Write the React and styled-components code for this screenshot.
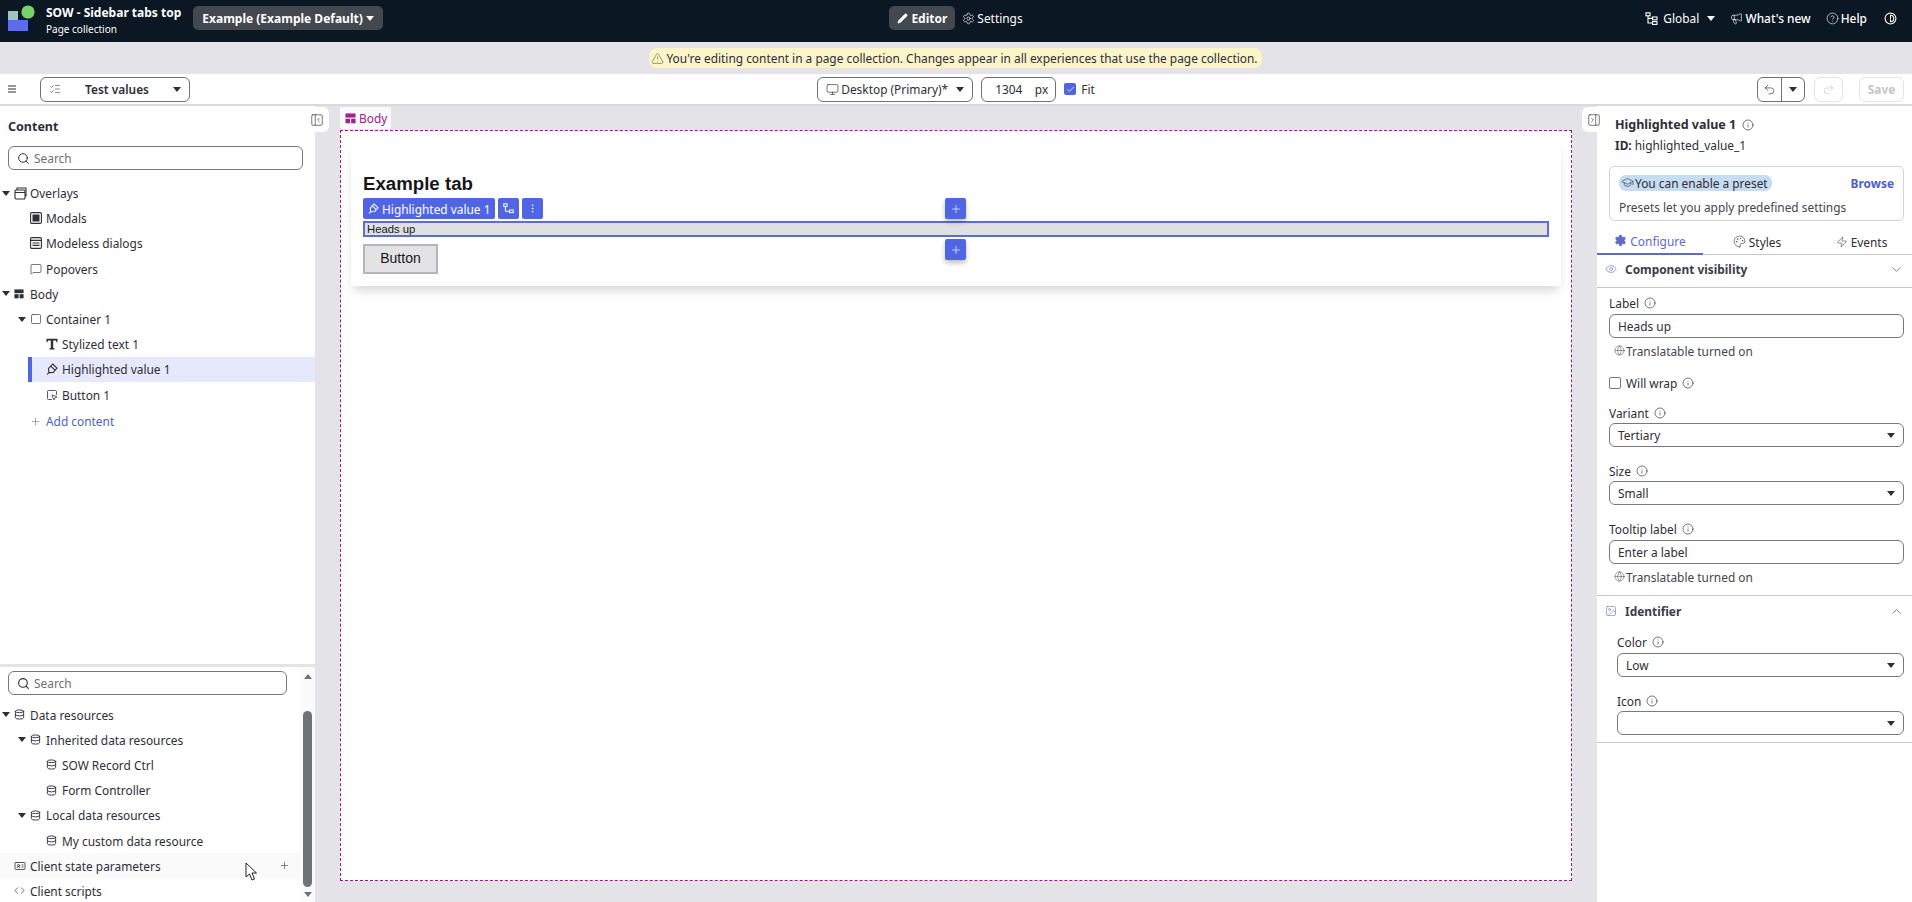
import React from "react";
import styled, { createGlobalStyle } from "styled-components";
import {
  Search,
  Info,
  Eye,
  Globe,
  ChevronDown,
  ChevronUp,
  Plus,
  Pencil,
  Settings,
  Palette,
  Zap,
  Megaphone,
  CircleHelp,
  Contrast,
  Database,
  Monitor,
  Undo2,
  Redo2,
  SquareMousePointer,
  GraduationCap,
  Image,
  Square,
  MessageSquare,
  Code,
  Check,
  EllipsisVertical,
  ListChecks,
  TriangleAlert,
  PanelLeftClose,
  PanelRightClose,
  IdCard,
} from "lucide-react";

const GlobalStyle = createGlobalStyle`
  html, body { margin: 0; padding: 0; height: 100%; }
  body { font-family: "Noto Sans", "Open Sans", sans-serif; font-size: 11.9px; color: #2e2e35; overflow: hidden; }
  #root { height: 100%; }
  * { box-sizing: border-box; }
`;

const Page = styled.div`
  display: flex;
  flex-direction: column;
  height: 902px;
  position: relative;
  overflow: hidden;
`;

/* top bar */
const TopBar = styled.header`
  height: 42px;
  background: #0b1722;
  color: #fff;
  display: grid;
  grid-template-columns: 1fr auto 1fr;
  align-items: center;
  padding: 0 8px 6px 8px;
  flex-shrink: 0;
`;
const TopLeft = styled.div`
  display: flex;
  align-items: center;
`;
const TitleBlock = styled.div`
  margin: 4px 0 0 11px;
  display: flex;
  flex-direction: column;
  gap: 1px;
`;
const AppTitle = styled.div`
  font-size: 12px;
  font-weight: 700;
  line-height: 16px;
  white-space: nowrap;
`;
const AppSub = styled.div`
  font-size: 10px;
  line-height: 14px;
`;
const DarkPill = styled.div`
  height: 24px;
  display: flex;
  align-items: center;
  gap: 3px;
  padding: 0 ${(p) => p.$pad || 8}px;
  background: #43474e;
  border-radius: 5px;
  font-weight: 700;
  font-size: 12px;
  white-space: nowrap;
  margin-left: ${(p) => p.$ml || 0}px;
`;
const TopCenter = styled.div`
  display: flex;
  align-items: center;
  gap: 7px;
`;
const TopLink = styled.div`
  display: flex;
  align-items: center;
  gap: 2px;
  font-weight: ${(p) => p.$weight || 400};
  white-space: nowrap;
`;
const TopRight = styled.div`
  display: flex;
  align-items: center;
  justify-content: flex-end;
  gap: 15px;
  padding-right: 7px;
`;
const Caret = styled.span`
  display: inline-block;
  flex-shrink: 0;
  width: 0;
  height: 0;
  border-left: ${(p) => p.$size || 4}px solid transparent;
  border-right: ${(p) => p.$size || 4}px solid transparent;
  border-top: ${(p) => (p.$size || 4) + 1}px solid ${(p) => p.$color || "#2e2e35"};
`;

/* banner */
const Banner = styled.div`
  height: 32px;
  background: #e3e3e8;
  display: flex;
  align-items: center;
  justify-content: center;
  flex-shrink: 0;
`;
const BannerPill = styled.div`
  height: 20px;
  display: flex;
  align-items: center;
  gap: 2px;
  padding: 0 4px 0 2px;
  background: #fbf5c9;
  border-radius: 8px;
  white-space: nowrap;
  margin-left: -1px;
`;

/* toolbar */
const Toolbar = styled.div`
  height: 32px;
  background: #fff;
  border-bottom: 2px solid #d9d9de;
  display: grid;
  grid-template-columns: 1fr auto 1fr;
  align-items: center;
  padding: 0 8px;
  flex-shrink: 0;
`;
const ToolLeft = styled.div`
  display: flex;
  align-items: center;
  gap: 24px;
`;
const ToolCenter = styled.div`
  display: flex;
  align-items: center;
  gap: 8px;
`;
const ToolRight = styled.div`
  display: flex;
  align-items: center;
  justify-content: flex-end;
  gap: 9px;
`;
const OutlineBox = styled.div`
  height: 25px;
  width: ${(p) => p.$w}px;
  display: flex;
  align-items: center;
  border: 1px solid ${(p) => (p.$faded ? "#e3e3e8" : "#6f6f76")};
  border-radius: 6px;
  padding: ${(p) => p.$pad || "0 8px"};
  gap: ${(p) => p.$gap ?? 6}px;
  color: ${(p) => (p.$faded ? "#c5c5ca" : "inherit")};
  font-weight: ${(p) => p.$weight || 400};
  justify-content: ${(p) => p.$justify || "flex-start"};
  margin-right: ${(p) => p.$mr || 0}px;
  white-space: nowrap;
`;
const Grow = styled.span`
  flex: 1;
  text-align: ${(p) => p.$align || "left"};
`;
const SplitCell = styled.div`
  width: 24px;
  height: 100%;
  display: flex;
  align-items: center;
  justify-content: center;
  border-left: ${(p) => (p.$line ? "1px solid #6f6f76" : "none")};
`;
const Tick = styled.span`
  width: 12px;
  height: 12px;
  background: #5065e4;
  border-radius: 2px;
  display: flex;
  align-items: center;
  justify-content: center;
  color: #fff;
`;
const FitLabel = styled.span`
  display: flex;
  align-items: center;
  gap: 5px;
`;

/* main */
const Main = styled.div`
  flex: 1;
  min-height: 0;
  display: grid;
  grid-template-columns: 315px 1fr 315px;
  background: #e3e3e8;
`;
const LeftPanel = styled.aside`
  display: flex;
  flex-direction: column;
  background: #fff;
  min-height: 0;
  overflow: hidden;
`;
const LeftTop = styled.div`
  flex: 1;
  min-height: 0;
`;
const PanelTitle = styled.h2`
  margin: 12px 0 10px 8px;
  font-size: 12.5px;
  line-height: 18px;
  font-weight: 700;
`;
const SearchBox = styled.div`
  height: 24px;
  margin-left: 8px;
  width: ${(p) => p.$w}px;
  border: 1px solid #77777e;
  border-radius: 6px;
  display: flex;
  align-items: center;
  gap: 4px;
  padding-left: 8px;
  color: #6f6f76;
  svg { color: #2e2e35; }
`;
const Tree = styled.div`
  margin-top: ${(p) => p.$mt}px;
`;
const Row = styled.div`
  height: 25.2px;
  display: flex;
  align-items: center;
  position: relative;
  padding-left: ${(p) => p.$pad}px;
  white-space: nowrap;
  background: ${(p) => (p.$selected ? "#e6e8fb" : p.$hover ? "#fafafb" : "transparent")};
  ${(p) =>
    p.$selected &&
    `margin-left: 28px; padding-left: ${p.$pad - 32}px; border-left: 4px solid #5065e4;`}
`;
const RowCaret = styled.span`
  width: 12px;
  display: flex;
  flex-shrink: 0;
`;
const RowIcon = styled.span`
  width: 16px;
  height: 14px;
  display: flex;
  align-items: center;
  flex-shrink: 0;
`;
const AddRow = styled.div`
  margin: 3px 0 0 30px;
  height: 22px;
  display: flex;
  align-items: center;
  gap: 5px;
  color: #4f5fc5;
`;
const RowAction = styled.span`
  position: absolute;
  left: 279px;
  display: flex;
`;
const LeftBottom = styled.div`
  height: 238px;
  flex-shrink: 0;
  border-top: 3px solid #e3e3e8;
  padding-top: 4px;
  position: relative;
  overflow: hidden;
`;
const BottomContent = styled.div`
  width: 303px;
`;
const Scrollbar = styled.div`
  position: absolute;
  top: 0;
  bottom: 0;
  right: 0;
  width: 15px;
  background: #fbfbfc;
  display: flex;
  flex-direction: column;
  align-items: flex-start;
  padding-left: 3px;
`;
const ArrowUp = styled.span`
  margin: 7px 0 0 1px;
  width: 0;
  height: 0;
  border-left: 4px solid transparent;
  border-right: 4px solid transparent;
  border-bottom: 5px solid #70747a;
`;
const ArrowDown = styled.span`
  margin: 5px 0 0 1px;
  width: 0;
  height: 0;
  border-left: 4px solid transparent;
  border-right: 4px solid transparent;
  border-top: 5px solid #70747a;
`;
const Thumb = styled.div`
  margin-top: 32px;
  width: 9px;
  height: 176px;
  background: #6f7379;
  border-radius: 5px;
`;
const Cursor = styled.svg`
  position: absolute;
  left: 245px;
  top: 195px;
`;

/* canvas */
const Center = styled.main`
  position: relative;
  display: flex;
  flex-direction: column;
  padding: 0 25px 21px 25px;
  min-height: 0;
`;
const BodyTab = styled.div`
  align-self: flex-start;
  height: 22px;
  margin: 1px 0 1px 0;
  padding: 0 4px 0 5px;
  background: #fafafb;
  border-radius: 0 0 3px 3px;
  color: #a4208f;
  display: flex;
  align-items: center;
  gap: 3px;
`;
const Canvas = styled.div`
  flex: 1;
  background: #fff;
  border: 1px dashed #a4108f;
  padding: 12px 10px;
`;
const Card = styled.section`
  background: #fff;
  box-shadow: 0 7px 10px -3px rgba(0, 0, 0, 0.17);
  padding: 29px 12px 12px;
  font-family: "Liberation Sans", Arial, sans-serif;
  position: relative;
`;
const Heading = styled.h1`
  margin: 0;
  padding-top: 1px;
  font-size: 18.67px;
  line-height: 21px;
  font-weight: 700;
  color: #17171b;
`;
const SelectBar = styled.div`
  margin-top: 4px;
  height: 21px;
  display: flex;
  gap: 3px;
  font-family: "Noto Sans", sans-serif;
`;
const BlueChip = styled.div`
  height: 21px;
  min-width: 21px;
  background: #5065e4;
  color: #fff;
  border-radius: 2px;
  display: flex;
  align-items: center;
  justify-content: center;
  gap: 3px;
  padding: 0 ${(p) => p.$pad || 0}px;
  white-space: nowrap;
`;
const Selected = styled.div`
  margin-top: 2px;
  height: 16px;
  background: #e0e0e2;
  border: 2px solid #5c6ce0;
  font-size: 11.3px;
  line-height: 12px;
  padding-left: 2px;
  color: #17171b;
`;
const PageButton = styled.div`
  margin-top: 7px;
  width: 75px;
  height: 30px;
  padding-bottom: 2px;
  background: #e3e3e6;
  border: 2px solid #b4b4b9;
  display: flex;
  align-items: center;
  justify-content: center;
  font-size: 14px;
  color: #17171b;
`;
const AddChip = styled.div`
  position: absolute;
  left: 594px;
  top: ${(p) => p.$top}px;
  width: 21px;
  height: 21px;
  background: #5065e4;
  color: #fff;
  border-radius: 2px;
  display: flex;
  align-items: center;
  justify-content: center;
  box-shadow: 0 3px 5px rgba(0, 0, 0, 0.25);
`;
const Handle = styled.div`
  position: absolute;
  top: 1px;
  ${(p) => (p.$right ? "right: -9px;" : "left: -10px;")}
  width: 24px;
  height: 25px;
  background: #fff;
  border-radius: 6px;
  display: flex;
  align-items: center;
  justify-content: center;
  z-index: 2;
`;

/* right panel */
const RightPanel = styled.aside`
  background: #fff;
  min-height: 0;
  overflow: hidden;
`;
const Head = styled.div`
  padding: 10px 0 0 18px;
`;
const HeadTitle = styled.div`
  display: flex;
  align-items: center;
  gap: 6px;
  font-size: 12.5px;
  font-weight: 700;
  line-height: 17px;
`;
const HeadId = styled.div`
  margin-top: 4px;
  line-height: 17px;
  b { font-weight: 700; }
`;
const PresetCard = styled.div`
  margin: 12px 8px 0 12px;
  height: 55px;
  border: 1px solid #d4d4d9;
  border-radius: 5px;
  padding: 7px 9px;
`;
const PresetTop = styled.div`
  display: flex;
  justify-content: space-between;
  align-items: center;
  height: 17px;
`;
const PresetPill = styled.span`
  display: flex;
  align-items: center;
  gap: 1px;
  height: 16px;
  background: #c6dcf1;
  border-radius: 7px;
  padding: 0 4px 0 2px;
`;
const Browse = styled.span`
  color: #4f5fc5;
  font-weight: 700;
`;
const PresetText = styled.div`
  margin-top: 8px;
  line-height: 16px;
  color: #45454c;
`;
const Tabs = styled.div`
  margin-top: 11px;
  height: 23px;
  display: grid;
  grid-template-columns: 106px 108px 101px;
  border-bottom: 1px solid #c5c5ca;
`;
const Tab = styled.div`
  display: flex;
  align-items: center;
  justify-content: center;
  gap: 3px;
  height: 23px;
  padding-bottom: 4px;
  color: ${(p) => (p.$active ? "#5c6bc8" : "inherit")};
  border-bottom: ${(p) => (p.$active ? "2px solid #5c6bc8" : "none")};
`;
const Section = styled.div`
  height: ${(p) => p.$h}px;
  display: flex;
  align-items: center;
  padding: 0 8px ${(p) => p.$pb || 0}px 8px;
  gap: 8px;
  font-weight: 700;
  color: #3c3c48;
  border-bottom: ${(p) => (p.$line ? "1px solid #c5c5ca" : "none")};
`;
const FieldList = styled.div`
  padding: 0 8px 0 ${(p) => p.$left}px;
  border-bottom: ${(p) => (p.$line ? "1px solid #c5c5ca" : "none")};
  height: ${(p) => p.$h}px;
`;
const Label = styled.div`
  display: flex;
  align-items: center;
  gap: 5px;
  height: 17px;
  padding-bottom: 2px;
  margin-top: ${(p) => p.$mt || 0}px;
`;
const Field = styled.div`
  height: 24px;
  margin-top: ${(p) => p.$mt ?? 1}px;
  border: 1px solid #77777e;
  border-radius: 6px;
  display: flex;
  align-items: center;
  justify-content: space-between;
  padding: 0 8px;
`;
const Hint = styled.div`
  display: flex;
  align-items: center;
  gap: 1px;
  margin: 5px 0 0 5px;
  height: 17px;
  padding-bottom: 2px;
  color: #45454c;
`;
const Box = styled.span`
  width: 12px;
  height: 12px;
  border: 1px solid #77777e;
  border-radius: 2px;
  flex-shrink: 0;
`;

const LayoutIcon = ({ size = 11 }) => (
  <svg width={size} height={size} viewBox="0 0 12 12" fill="currentColor">
    <rect x="0.5" y="0.5" width="11" height="4.5" />
    <rect x="0.5" y="6.2" width="5" height="5" />
    <rect x="6.7" y="6.2" width="4.8" height="5" />
  </svg>
);
const OverlayIcon = () => (
  <svg width="13" height="13" viewBox="0 0 13 13" fill="none" stroke="currentColor" strokeWidth="1.1">
    <rect x="1" y="3" width="10" height="9" rx="1" />
    <path d="M3 3V1h9v8h-1M1 5.5h10" />
  </svg>
);
const ModalIcon = () => (
  <svg width="12" height="12" viewBox="0 0 12 12" fill="none" stroke="currentColor" strokeWidth="1.1">
    <rect x="0.6" y="0.6" width="10.8" height="10.8" rx="1.2" />
    <rect x="2.5" y="2.5" width="7" height="7" fill="currentColor" stroke="none" />
  </svg>
);
const DialogIcon = () => (
  <svg width="12" height="12" viewBox="0 0 12 12" fill="none" stroke="currentColor" strokeWidth="1.1">
    <rect x="0.6" y="0.6" width="10.8" height="10.8" rx="1.2" />
    <path d="M0.6 3.4h10.8M2.5 6h7M2.5 8.4h7" />
  </svg>
);
const TextIcon = () => (
  <svg width="12" height="12" viewBox="0 0 12 12" fill="currentColor">
    <path d="M0.5 0.8h11v3.4h-1l-.5-1.8H7.2v7.6l1.4.5v1H3.4v-1l1.4-.5V2.4H2l-.5 1.8h-1z" />
  </svg>
);
const MarkerIcon = ({ size = 12 }) => (
  <svg width={size} height={size} viewBox="0 0 12 12" fill="none" stroke="currentColor" strokeWidth="1.1" strokeLinejoin="round">
    <path d="M6.6 1 11 5.2 7.2 9.4 3 9.6 2.4 5.6z" />
    <path d="M3 9.6 1 11.4M5 3.4 9 7.2" />
  </svg>
);
const SiteTreeIcon = ({ size = 13 }) => (
  <svg width={size} height={size} viewBox="0 0 13 13" fill="none" stroke="currentColor" strokeWidth="1.1">
    <rect x="1" y="0.8" width="4" height="3" />
    <rect x="7.5" y="5" width="4.5" height="2.8" />
    <rect x="7.5" y="9.6" width="4.5" height="2.8" />
    <path d="M3 3.8V11h4.5M3 6.4h4.5" />
  </svg>
);
const FlowIcon = () => (
  <svg width="11" height="11" viewBox="0 0 11 11" fill="none" stroke="currentColor" strokeWidth="1">
    <rect x="0.8" y="0.8" width="3.2" height="2.6" />
    <rect x="6.5" y="7" width="3.8" height="2.6" />
    <path d="M2.4 3.4v4.9h4.1" />
  </svg>
);
const Logo = () => (
  <svg width="27" height="26" viewBox="0 0 27 26">
    <rect x="0" y="6" width="10" height="10" fill="#9fc4bd" />
    <rect x="0" y="15" width="20" height="11" fill="#5b6cf0" />
    <circle cx="20" cy="7" r="6.6" fill="#76d365" />
  </svg>
);
const Tiny = ({ icon: I, size = 12, sw = 1.3, color }) => <I size={size} strokeWidth={sw} color={color} />;

const TreeRow = ({ depth, caret, icon, pad, children, ...rest }) => (
  <Row $pad={pad ?? (caret ? 2 + depth * 16 : depth * 16 - 2)} {...rest}>
    {caret && (
      <RowCaret>
        <Caret $size={4} />
      </RowCaret>
    )}
    <RowIcon>{icon}</RowIcon>
    {children}
  </Row>
);

const Db = () => <Tiny icon={Database} size={11} sw={2} />;
const InfoMark = () => <Tiny icon={Info} size={12} sw={1.3} />;

const App = () => {
  return (
    <Page>
      <GlobalStyle />
      <TopBar>
        <TopLeft>
          <Logo />
          <TitleBlock>
            <AppTitle>SOW - Sidebar tabs top</AppTitle>
            <AppSub>Page collection</AppSub>
          </TitleBlock>
          <DarkPill $ml={12} $pad={9}>
            Example (Example Default)
            <Caret $color="#fff" />
          </DarkPill>
        </TopLeft>
        <TopCenter>
          <DarkPill>
            <Pencil size={11} fill="#fff" strokeWidth={1.5} />
            Editor
          </DarkPill>
          <TopLink>
            <Settings size={13} strokeWidth={1.2} />
            Settings
          </TopLink>
        </TopCenter>
        <TopRight>
          <TopLink>
            <SiteTreeIcon />
            <span>&nbsp;Global&nbsp;&nbsp;</span>
            <Caret $color="#fff" />
          </TopLink>
          <TopLink $weight={500}>
            <Tiny icon={Megaphone} size={13} sw={1.2} />
            What's new
          </TopLink>
          <TopLink $weight={500}>
            <Tiny icon={CircleHelp} size={13} sw={1.2} />
            Help
          </TopLink>
          <Contrast size={13} strokeWidth={2} style={{ marginLeft: 2 }} />
        </TopRight>
      </TopBar>

      <Banner>
        <BannerPill>
          <TriangleAlert size={13} strokeWidth={1.2} color="#5d6b2e" />
          You're editing content in a page collection. Changes appear in all experiences that use the page collection.
        </BannerPill>
      </Banner>

      <Toolbar>
        <ToolLeft>
          <svg width="8" height="8" viewBox="0 0 8 8" stroke="#2e2e35" strokeWidth="1">
            <path d="M0 1h8M0 4h8M0 7h8" />
          </svg>
          <OutlineBox $w={150} $weight={600}>
            <Tiny icon={ListChecks} size={12} sw={1.1} />
            <Grow $align="center">Test values</Grow>
            <Caret />
          </OutlineBox>
        </ToolLeft>
        <ToolCenter>
          <OutlineBox $w={156} $gap={2}>
            <Monitor size={13} strokeWidth={1.2} />
            <Grow>Desktop (Primary)*</Grow>
            <Caret />
          </OutlineBox>
          <OutlineBox $w={75} $pad="0 7px 0 13px">
            <Grow>1304</Grow>
            <span>px</span>
          </OutlineBox>
          <FitLabel>
            <Tick>
              <Check size={9} strokeWidth={2} />
            </Tick>
            Fit
          </FitLabel>
        </ToolCenter>
        <ToolRight>
          <OutlineBox $w={48} $pad="0" $gap={0}>
            <SplitCell>
              <Undo2 size={13} strokeWidth={1.2} />
            </SplitCell>
            <SplitCell $line>
              <Caret />
            </SplitCell>
          </OutlineBox>
          <OutlineBox $w={29} $faded $justify="center" $mr={7} $pad="0">
            <Redo2 size={13} strokeWidth={1.2} />
          </OutlineBox>
          <OutlineBox $w={45} $faded $justify="center" $weight={700} $pad="0">
            Save
          </OutlineBox>
        </ToolRight>
      </Toolbar>

      <Main>
        <LeftPanel>
          <LeftTop>
            <PanelTitle>Content</PanelTitle>
            <SearchBox $w={295}>
              <Search size={13} strokeWidth={1.8} />
              Search
            </SearchBox>
            <Tree $mt={10.5}>
              <TreeRow depth={0} caret icon={<OverlayIcon />}>Overlays</TreeRow>
              <TreeRow depth={2} icon={<ModalIcon />}>Modals</TreeRow>
              <TreeRow depth={2} icon={<DialogIcon />}>Modeless dialogs</TreeRow>
              <TreeRow depth={2} icon={<Tiny icon={MessageSquare} />}>Popovers</TreeRow>
              <TreeRow depth={0} caret icon={<LayoutIcon size={10} />}>Body</TreeRow>
              <TreeRow depth={1} caret icon={<Tiny icon={Square} />}>Container 1</TreeRow>
              <TreeRow depth={3} icon={<TextIcon />}>Stylized text 1</TreeRow>
              <TreeRow depth={3} $selected icon={<MarkerIcon />}>Highlighted value 1</TreeRow>
              <TreeRow depth={3} icon={<Tiny icon={SquareMousePointer} sw={1.6} />}>Button 1</TreeRow>
            </Tree>
            <AddRow>
              <Plus size={11} strokeWidth={1.2} />
              Add content
            </AddRow>
          </LeftTop>
          <LeftBottom>
            <BottomContent>
              <SearchBox $w={279}>
                <Search size={13} strokeWidth={2} />
                Search
              </SearchBox>
              <Tree $mt={7}>
                <TreeRow depth={0} caret icon={<Db />}>Data resources</TreeRow>
                <TreeRow depth={1} caret icon={<Db />}>Inherited data resources</TreeRow>
                <TreeRow depth={3} icon={<Db />}>SOW Record Ctrl</TreeRow>
                <TreeRow depth={3} icon={<Db />}>Form Controller</TreeRow>
                <TreeRow depth={1} caret icon={<Db />}>Local data resources</TreeRow>
                <TreeRow depth={3} icon={<Db />}>My custom data resource</TreeRow>
                <TreeRow depth={0} pad={14} $hover icon={<Tiny icon={IdCard} sw={1.6} />}>
                  Client state parameters
                  <RowAction>
                    <Plus size={11} strokeWidth={1.2} />
                  </RowAction>
                </TreeRow>
                <TreeRow depth={0} pad={14} icon={<Tiny icon={Code} size={11} sw={1.5} />}>Client scripts</TreeRow>
              </Tree>
            </BottomContent>
            <Scrollbar>
              <ArrowUp />
              <Thumb />
              <ArrowDown />
            </Scrollbar>
            <Cursor width="13" height="19" viewBox="0 0 13 19">
              <path d="M1 1v14l3.5-3 2.5 6 2.5-1-2.5-6h4.5z" fill="#fff" stroke="#222" strokeWidth="1" />
            </Cursor>
          </LeftBottom>
        </LeftPanel>

        <Center>
          <Handle>
            <PanelLeftClose size={14} strokeWidth={1.1} />
          </Handle>
          <BodyTab>
            <LayoutIcon size={11} />
            Body
          </BodyTab>
          <Canvas>
            <Card>
              <Heading>Example tab</Heading>
              <SelectBar>
                <BlueChip $pad={5}>
                  <MarkerIcon size={11} />
                  Highlighted value 1
                </BlueChip>
                <BlueChip>
                  <FlowIcon />
                </BlueChip>
                <BlueChip>
                  <EllipsisVertical size={11} strokeWidth={1.6} />
                </BlueChip>
              </SelectBar>
              <Selected>Heads up</Selected>
              <PageButton>Button</PageButton>
              <AddChip $top={55}>
                <Plus size={12} strokeWidth={1.3} />
              </AddChip>
              <AddChip $top={96}>
                <Plus size={12} strokeWidth={1.3} />
              </AddChip>
            </Card>
          </Canvas>
          <Handle $right>
            <PanelRightClose size={14} strokeWidth={1.1} />
          </Handle>
        </Center>

        <RightPanel>
          <Head>
            <HeadTitle>
              Highlighted value 1 <InfoMark />
            </HeadTitle>
            <HeadId>
              <b>ID:</b> highlighted_value_1
            </HeadId>
          </Head>
          <PresetCard>
            <PresetTop>
              <PresetPill>
                <Tiny icon={GraduationCap} size={13} sw={1.1} />
                You can enable a preset
              </PresetPill>
              <Browse>Browse</Browse>
            </PresetTop>
            <PresetText>Presets let you apply predefined settings</PresetText>
          </PresetCard>
          <Tabs>
            <Tab $active>
              <Settings size={13} fill="#5c6bc8" strokeWidth={1.2} />
              Configure
            </Tab>
            <Tab>
              <Tiny icon={Palette} size={13} sw={1.1} />
              Styles
            </Tab>
            <Tab>
              <Tiny icon={Zap} size={12} sw={1.1} />
              Events
            </Tab>
          </Tabs>
          <Section $h={33} $pb={4} $line>
            <Eye size={12} strokeWidth={1.2} color="#5c6bc8" />
            <Grow>Component visibility</Grow>
            <ChevronDown size={15} strokeWidth={1} />
          </Section>
          <FieldList $left={12} $h={301} $line>
            <Label $mt={7}>
              Label <InfoMark />
            </Label>
            <Field $mt={2}>Heads up</Field>
            <Hint>
              <Tiny icon={Globe} size={11} sw={1.1} />
              Translatable turned on
            </Hint>
            <Label $mt={15}>
              <Box />
              Will wrap <InfoMark />
            </Label>
            <Label $mt={13}>
              Variant <InfoMark />
            </Label>
            <Field>
              Tertiary
              <Caret />
            </Field>
            <Label $mt={16}>
              Size <InfoMark />
            </Label>
            <Field>
              Small
              <Caret />
            </Field>
            <Label $mt={16}>
              Tooltip label <InfoMark />
            </Label>
            <Field $mt={2}>Enter a label</Field>
            <Hint>
              <Tiny icon={Globe} size={11} sw={1.1} />
              Translatable turned on
            </Hint>
          </FieldList>
          <Section $h={38} $pb={8}>
            <Tiny icon={Image} size={12} sw={1.1} color="#5c6bc8" />
            <Grow>Identifier</Grow>
            <ChevronUp size={15} strokeWidth={1} />
          </Section>
          <FieldList $left={20} $h={109} $line>
            <Label>
              Color <InfoMark />
            </Label>
            <Field $mt={2}>
              Low
              <Caret />
            </Field>
            <Label $mt={16}>
              Icon <InfoMark />
            </Label>
            <Field $mt={1}>
              <span />
              <Caret />
            </Field>
          </FieldList>
        </RightPanel>
      </Main>
    </Page>
  );
};

export default App;
